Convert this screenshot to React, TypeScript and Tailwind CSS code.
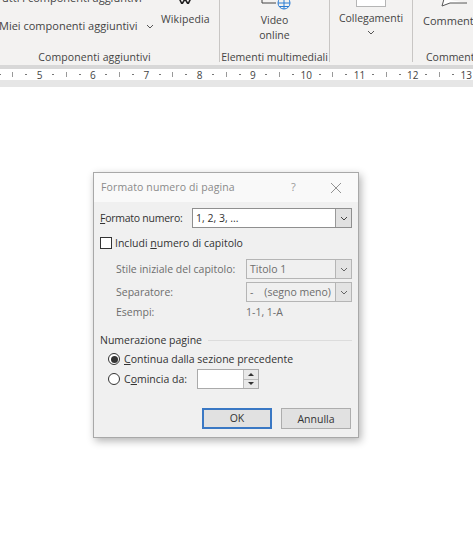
import React from "react";

const font = { fontFamily: '"Open Sans", "Noto Sans", sans-serif' };

function Ruler() {
  const items: React.ReactNode[] = [];
  const cell = "w-[13.34px] shrink-0 flex items-center justify-center";
  items.push(<div key="d0" className={cell}><div className="w-[2px] h-[1px] bg-[#777]" /></div>);
  items.push(<div key="t0" className={cell}><div className="w-[1px] h-[5px] bg-[#999]" /></div>);
  items.push(<div key="e0" className={cell}><div className="w-[2px] h-[1px] bg-[#777]" /></div>);
  for (let n = 5; n <= 13; n++) {
    items.push(<div key={`n${n}`} className={cell}><span className="text-[10px] leading-none text-[#444]">{n}</span></div>);
    items.push(<div key={`a${n}`} className={cell}><div className="w-[2px] h-[1px] bg-[#777]" /></div>);
    items.push(<div key={`t${n}`} className={cell}><div className="w-[1px] h-[5px] bg-[#999]" /></div>);
    items.push(<div key={`b${n}`} className={cell}><div className="w-[2px] h-[1px] bg-[#777]" /></div>);
  }
  return (
    <div className="h-[11px] bg-white overflow-hidden">
      <div className="h-[11px] flex items-center -ml-[7px] w-[490px]">{items}</div>
    </div>
  );
}

function Chevron({ className = "" }: { className?: string }) {
  return (
    <svg width="8" height="5" viewBox="0 0 8 5" className={className}>
      <path d="M1 1 L4 4 L7 1" fill="none" stroke="currentColor" strokeWidth="1" />
    </svg>
  );
}

function Combo({ text, disabled, width }: { text: React.ReactNode; disabled?: boolean; width: string }) {
  return (
    <div className={`flex h-[20px] border ${disabled ? "border-[#b5b5b5] bg-[#f0f0f0] text-[#6d6d6d]" : "border-[#8f8f8f] bg-white text-[#333]"} ${width}`}>
      <div className="flex-1 pl-[3px] pt-[2px] flex items-center text-[10.5px] whitespace-pre">{text}</div>
      <div className={`w-[16px] flex items-center justify-center border-l ${disabled ? "border-[#b5b5b5] bg-[#e3e3e3] text-[#666]" : "border-[#999] bg-[#e1e1e1] text-[#444]"}`}>
        <Chevron />
      </div>
    </div>
  );
}

function Radio({ checked }: { checked?: boolean }) {
  return (
    <div className="w-[12px] h-[12px] rounded-full border border-[#333] bg-white flex items-center justify-center shrink-0">
      {checked && <div className="w-[7px] h-[7px] rounded-full bg-[#333]" />}
    </div>
  );
}

function Dialog() {
  return (
    <div className="absolute left-[93px] top-[172px] w-[266px] h-[266px] border border-[#a8a8a8] bg-[#f0f0f0] shadow-[2px_3px_8px_rgba(0,0,0,0.3)] text-[10.5px] text-[#333] flex flex-col">
      <div className="h-[29px] bg-[#f9f9f9] flex items-center pl-[7px] shrink-0">
        <span className="text-[#8a8a8a] text-[10.5px] w-[190px] tracking-[0.12px]">Formato numero di pagina</span>
        <span className="text-[#999] text-[11px] w-[40px]">?</span>
        <svg width="10" height="10" viewBox="0 0 10 10" className="text-[#777]">
          <path d="M0 0 L10 10 M10 0 L0 10" stroke="currentColor" strokeWidth="0.8" />
        </svg>
      </div>
      <div className="flex-1 flex flex-col pl-[6px] pr-[6px] pt-[6px]">
        <div className="flex items-center justify-between">
          <span className="tracking-[-0.25px] pt-[2px]"><u>F</u>ormato numero:</span>
          <Combo text="1, 2, 3, ..." width="w-[160px]" />
        </div>
        <div className="flex items-center gap-[3px] mt-[8px] h-[14px]">
          <div className="w-[12px] h-[12px] border border-[#333] bg-white" />
          <span className="pt-[2px]">Includi <u>n</u>umero di capitolo</span>
        </div>
        <div className="flex items-center justify-between mt-[9px] pl-[16px] text-[#6d6d6d]">
          <span className="pt-[2px]">Stile iniziale del capitolo:</span>
          <Combo text="Titolo 1" disabled width="w-[106px]" />
        </div>
        <div className="flex items-center justify-between mt-[3px] pl-[16px] text-[#6d6d6d]">
          <span className="pt-[2px]">Separatore:</span>
          <Combo text={"-    (segno meno)"} disabled width="w-[106px]" />
        </div>
        <div className="flex items-center mt-[3px] pl-[16px] text-[#6d6d6d] h-[14px]">
          <span className="w-[130px] pt-[2px]">Esempi:</span>
          <span className="pt-[2px]">1-1, 1-A</span>
        </div>
        <div className="flex items-center gap-[6px] mt-[14px] h-[14px]">
          <span className="pt-[2px]">Numerazione pagine</span>
          <div className="flex-1 h-[1px] bg-[#dcdcdc]" />
        </div>
        <div className="flex items-center gap-[4px] mt-[5px] pl-[8px] h-[14px]">
          <Radio checked />
          <span className="pt-[2px]"><u>C</u>ontinua dalla sezione precedente</span>
        </div>
        <div className="flex items-center gap-[4px] mt-[3px] pl-[8px] h-[20px]">
          <Radio />
          <span className="w-[69px] pt-[2px]">C<u>o</u>mincia da:</span>
          <div className="w-[62px] h-[20px] border border-[#aaa] bg-white flex justify-end">
            <div className="w-[15px] flex flex-col border-l border-[#bbb] bg-[#e8e8e8]">
              <div className="flex-1 flex items-center justify-center border-b border-[#bbb]">
                <div className="w-0 h-0 border-x-[3px] border-x-transparent border-b-[3px] border-b-[#333]" />
              </div>
              <div className="flex-1 flex items-center justify-center">
                <div className="w-0 h-0 border-x-[3px] border-x-transparent border-t-[3px] border-t-[#333]" />
              </div>
            </div>
          </div>
        </div>
        <div className="flex justify-between mt-[19px] pl-[102px] pr-[1px]">
          <div className="w-[70px] h-[21px] pt-[1px] border-2 border-[#3a78c4] bg-[#e1e1e1] flex items-center justify-center">OK</div>
          <div className="w-[70px] h-[21px] pt-[2px] border border-[#adadad] bg-[#e1e1e1] flex items-center justify-center">Annulla</div>
        </div>
      </div>
    </div>
  );
}

export default function App() {
  return (
    <div className="relative w-[473px] h-[540px] bg-white overflow-hidden text-[#444]" style={font}>
      <div className="h-[65px] bg-[#f3f2f1] flex items-start text-[10.5px] overflow-hidden">
        <div className="w-[220px] h-[62px] shrink-0 border-r border-[#c8c6c4] flex flex-col">
          <div className="flex-1 flex">
            <div className="flex flex-col w-[156px] -mt-[10px] shrink-0">
              <span className="whitespace-nowrap h-[26px] -ml-[4px] text-[11px]">Tutti i componenti aggiuntivi</span>
              <div className="flex items-center h-[20px] whitespace-nowrap text-[11px]">
                <span className="-ml-[1px]">Miei componenti aggiuntivi</span>
                <Chevron className="ml-[9px] text-[#555]" />
              </div>
            </div>
            <div className="flex flex-col items-center ml-[5px] tracking-[0.1px]">
              <svg width="12" height="4" viewBox="0 0 12 4" className="text-[#222]">
                <path d="M0.5 -1 L3 4 L6 -1 L9 4 L11.5 -1" fill="none" stroke="currentColor" strokeWidth="1.6" />
              </svg>
              <span className="mt-[8px]">Wikipedia</span>
            </div>
          </div>
          <div className="h-[10px] leading-[10px] text-center pr-[30px] whitespace-nowrap tracking-[0.1px]">Componenti aggiuntivi</div>
        </div>
        <div className="w-[110px] h-[62px] shrink-0 border-r border-[#c8c6c4] flex flex-col">
          <div className="flex-1 flex flex-col items-center">
            <svg width="36" height="10" viewBox="0 0 36 10" className="ml-[8px]">
              <path d="M1 0 V3 H15" fill="none" stroke="#444" strokeWidth="1" />
              <circle cx="23" cy="3" r="6" fill="none" stroke="#2b7cd3" strokeWidth="1" />
              <path d="M17 3 H29 M23 -3 V9 M18 6.5 H28" stroke="#2b7cd3" strokeWidth="1" fill="none" />
            </svg>
            <span className="leading-[15px] mt-[3px]">Video</span>
            <span className="leading-[15px]">online</span>
          </div>
          <div className="h-[10px] leading-[10px] text-center whitespace-nowrap">Elementi multimediali</div>
        </div>
        <div className="w-[83px] h-[62px] shrink-0 border-r border-[#c8c6c4] flex flex-col items-center">
          <div className="w-[30px] h-[7px] bg-white border border-t-0 border-[#b5b5b5]" />
          <span className="mt-[4px]">Collegamenti</span>
          <Chevron className="mt-[3px] text-[#555]" />
        </div>
        <div className="flex-1 h-[62px] flex flex-col pl-[10px] whitespace-nowrap">
          <svg width="26" height="7" viewBox="0 0 26 7" className="ml-[18px] shrink-0">
            <path d="M3 -1 L1 6 L9 3 H26" fill="#fff" stroke="#555" strokeWidth="1" />
          </svg>
          <span className="mt-[6px] h-[39px] shrink-0 text-[11px]">Commenti</span>
          <span className="ml-[3px] h-[10px] leading-[10px] shrink-0">Commenti</span>
        </div>
      </div>
      <div className="h-[4px] bg-[#d8d8d8]" />
      <Ruler />
      <div className="h-[7px] bg-[#e6e6e6]" />
      <Dialog />
    </div>
  );
}
